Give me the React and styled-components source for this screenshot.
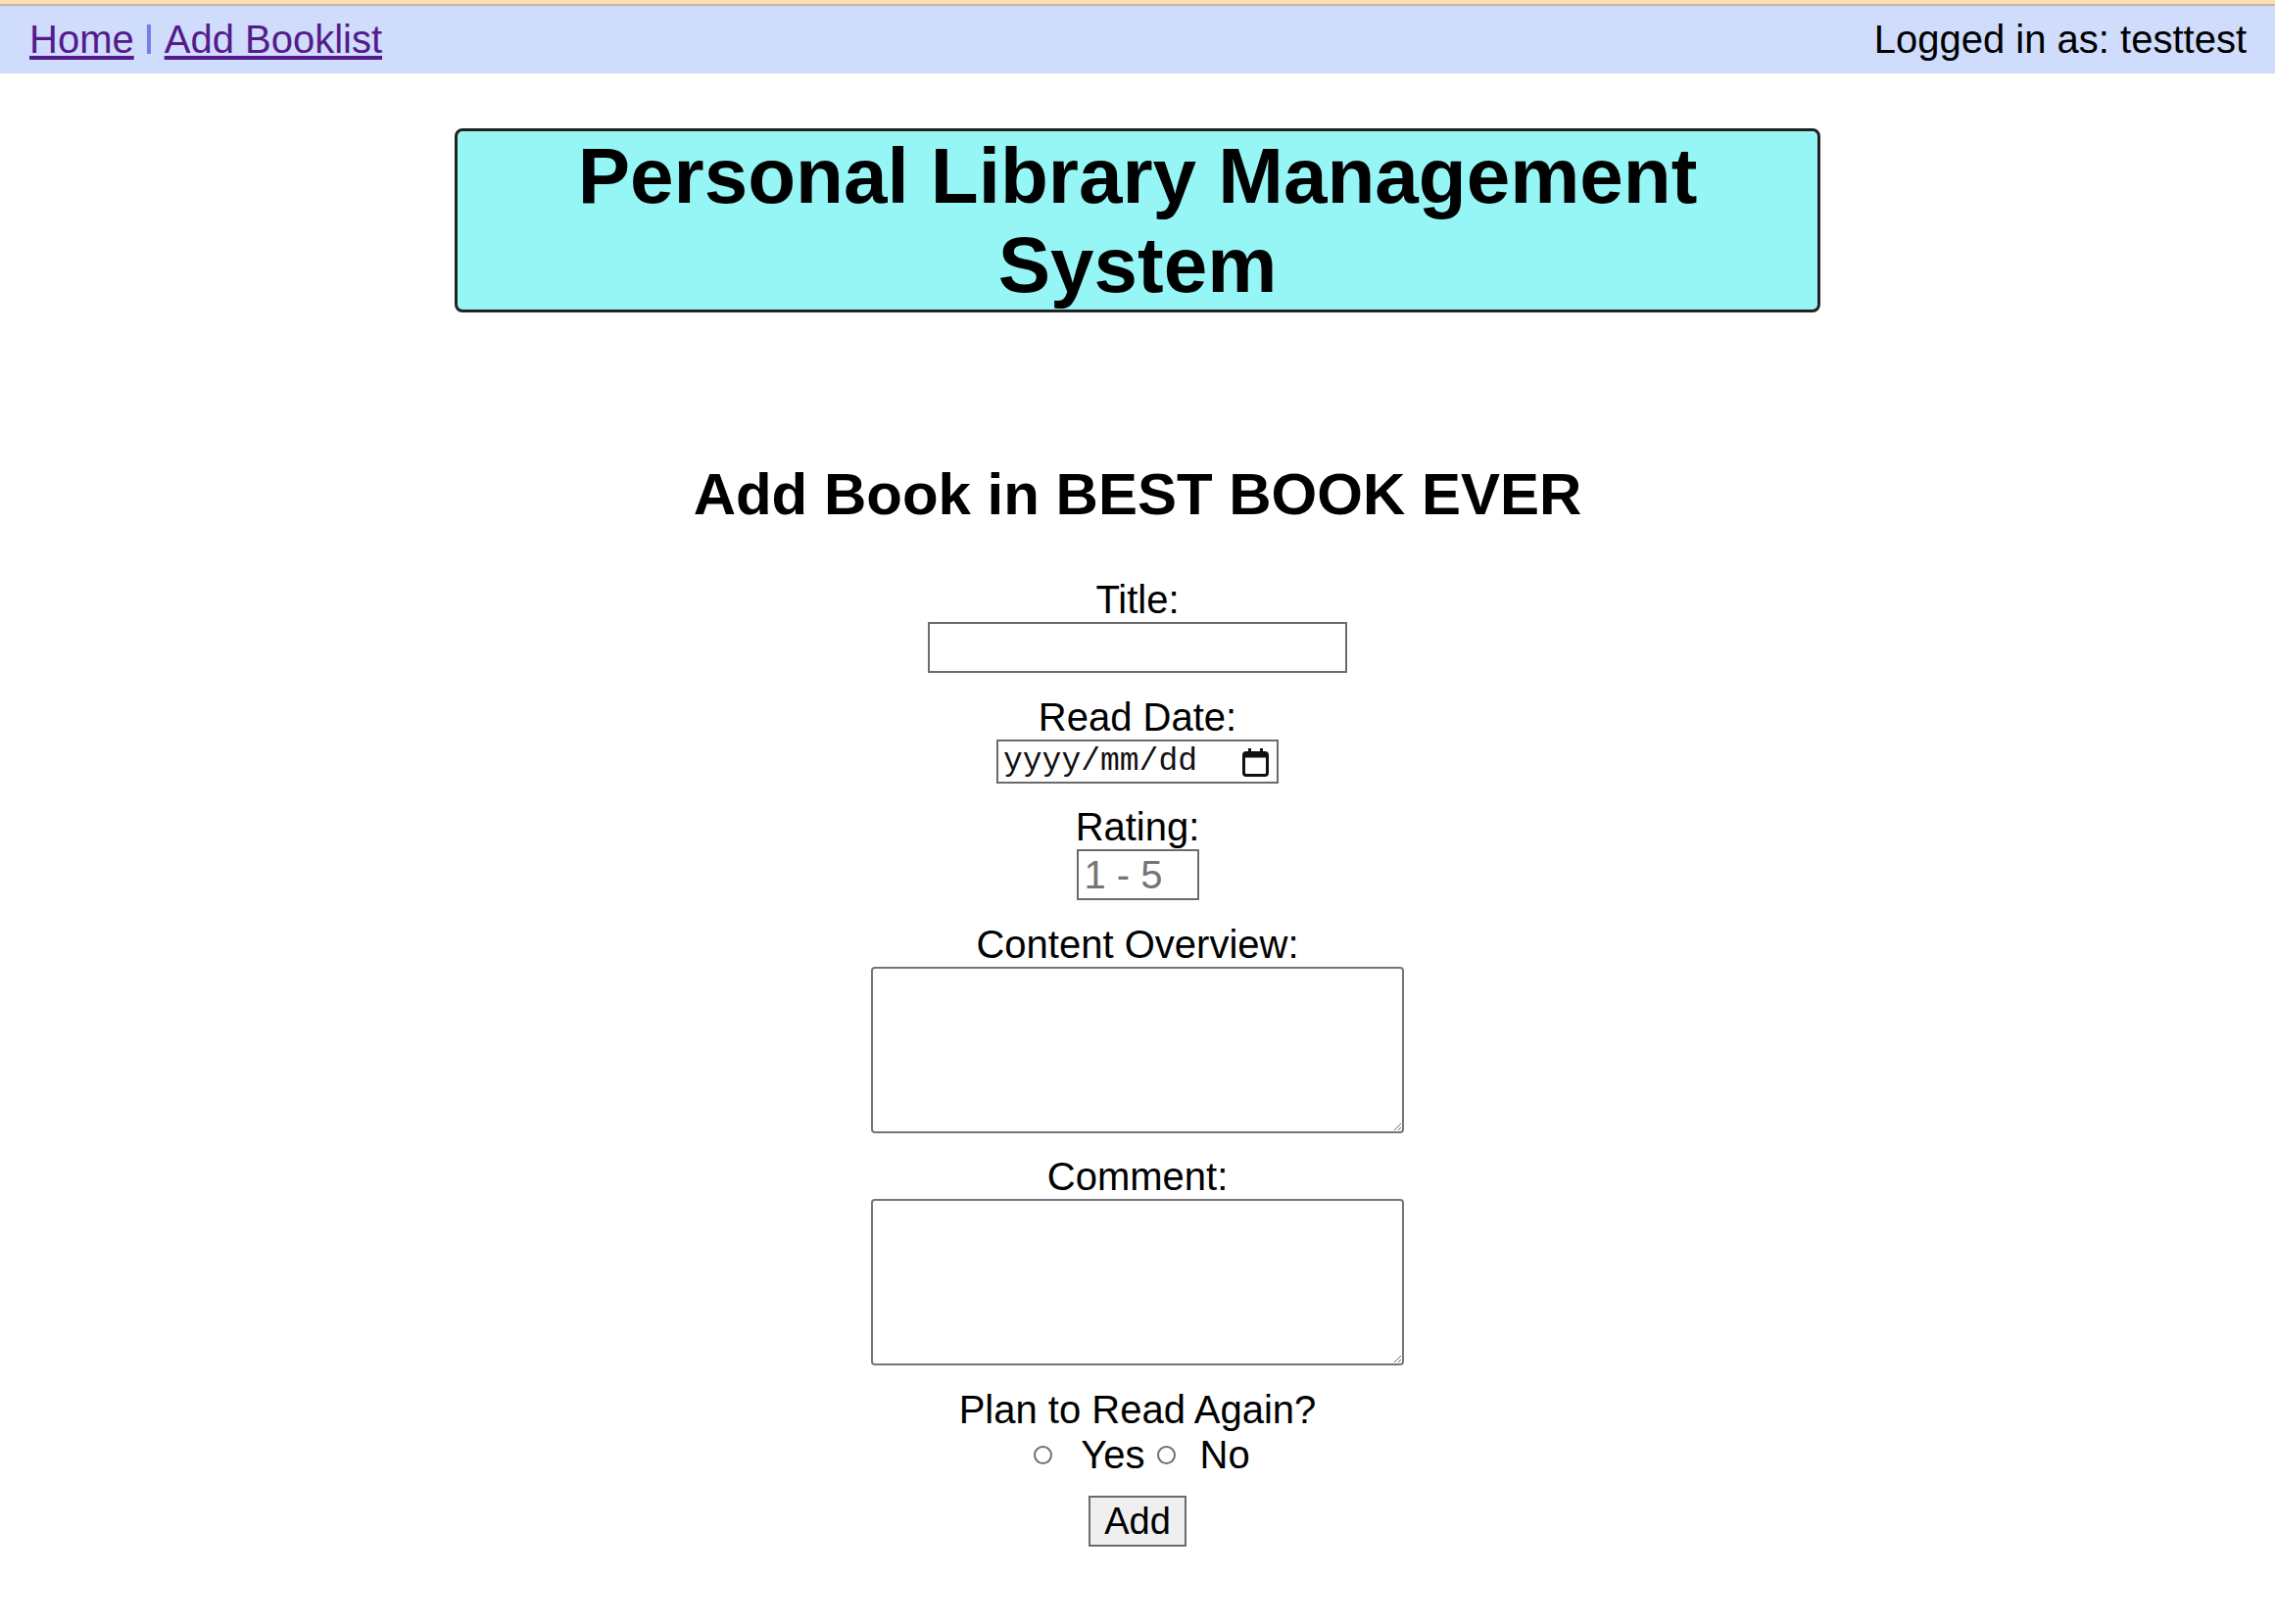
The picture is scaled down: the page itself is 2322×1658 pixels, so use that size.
import React from 'react';
import styled, { createGlobalStyle } from 'styled-components';

const GlobalStyle = createGlobalStyle`
    body {
        margin: 0;
        background: #ffffff;
        font-family: 'Liberation Sans', Arial, Helvetica, sans-serif;
        color: #000000;
    }
`;

const CalendarIcon = () => (
    <svg width='27' height='29' viewBox='0 0 27 29' fill='none'>
        <rect x='6' y='0' width='3' height='5' fill='#111' />
        <rect x='18' y='0' width='3' height='5' fill='#111' />
        <rect x='1.5' y='4.5' width='24' height='23' rx='2.5' stroke='#111' strokeWidth='3' />
        <rect x='1.5' y='4.5' width='24' height='5' fill='#111' />
    </svg>
);

const App = () => {
    return (
        <>
            <GlobalStyle />
            <TopStrip />
            <NavBar>
                <NavLinks>
                    <NavLink href='#'>Home</NavLink>
                    <Divider />
                    <NavLink href='#'>Add Booklist</NavLink>
                </NavLinks>
                <UserInfo>Logged in as: testtest</UserInfo>
            </NavBar>

            <Main>
                <HeaderBox>
                    <SiteTitle>Personal Library Management System</SiteTitle>
                </HeaderBox>

                <SectionTitle>Add Book in BEST BOOK EVER</SectionTitle>

                <Form onSubmit={e => e.preventDefault()}>
                    <Field>
                        <Label htmlFor='title'>Title:</Label>
                        <TextInput id='title' type='text' />
                    </Field>

                    <Field>
                        <Label htmlFor='readDate'>Read Date:</Label>
                        <DateBox id='readDate'>
                            <DateText>yyyy/mm/dd</DateText>
                            <CalendarIcon />
                        </DateBox>
                    </Field>

                    <Field>
                        <Label htmlFor='rating'>Rating:</Label>
                        <RatingInput id='rating' type='text' placeholder='1 - 5' />
                    </Field>

                    <Field>
                        <Label htmlFor='overview'>Content Overview:</Label>
                        <TextArea id='overview' />
                    </Field>

                    <Field>
                        <Label htmlFor='comment'>Comment:</Label>
                        <TextArea id='comment' />
                    </Field>

                    <Field>
                        <Label>Plan to Read Again?</Label>
                        <RadioRow>
                            <Radio type='radio' name='again' id='yes' gap='29px' />
                            <RadioLabel htmlFor='yes'>Yes</RadioLabel>
                            <Radio type='radio' name='again' id='no' gap='25px' />
                            <RadioLabel htmlFor='no'>No</RadioLabel>
                        </RadioRow>
                    </Field>

                    <SubmitButton type='submit'>Add</SubmitButton>
                </Form>
            </Main>
        </>
    );
};

export default App;

const TopStrip = styled.div`
    height: 4px;
    background: #fbdfb9;
    border-bottom: 2px solid #c6b49c;
`;

const NavBar = styled.nav`
    display: flex;
    align-items: center;
    justify-content: space-between;

    height: 69px;
    padding: 0 29px 2px 30px;
    box-sizing: border-box;

    background: #cfdcfb;
    font-size: 40px;
    line-height: 46px;
`;

const NavLinks = styled.div`
    display: flex;
    align-items: center;
`;

const NavLink = styled.a`
    color: #551a8b;
    text-decoration: underline;
    text-decoration-thickness: 4px;
    text-underline-offset: 3px;
`;

const Divider = styled.span`
    display: inline-block;
    width: 4px;
    height: 30px;
    margin: 0 14px 0 13px;
    background: #7b7be8;
`;

const UserInfo = styled.span`
    color: #000000;
`;

const Main = styled.main`
    display: flex;
    flex-direction: column;
    align-items: center;

    padding: 56px 0 60px;
`;

const HeaderBox = styled.header`
    width: 60%;
    box-sizing: border-box;

    background: #96f6f6;
    border: 3px solid #222222;
    border-radius: 8px;
    text-align: center;
`;

const SiteTitle = styled.h1`
    margin: 0;
    font-size: 80px;
    line-height: 91px;
    font-weight: 700;
`;

const SectionTitle = styled.h2`
    margin: 151px 0 50px;
    font-size: 60px;
    line-height: 69px;
    font-weight: 700;
`;

const Form = styled.form`
    display: flex;
    flex-direction: column;
    align-items: center;
`;

const Field = styled.div`
    display: flex;
    flex-direction: column;
    align-items: center;

    margin-bottom: 21.5px;
`;

const Label = styled.label`
    font-size: 40px;
    line-height: 46px;
`;

const TextInput = styled.input`
    width: 428px;
    height: 52px;
    box-sizing: border-box;
    margin: 0;
    padding: 0 6px;

    border: 2px solid #6b6b6b;
    border-radius: 0;
    background: #ffffff;
    font-family: 'Liberation Sans', Arial, sans-serif;
    font-size: 33px;
    outline: none;
`;

const RatingInput = styled(TextInput)`
    width: 125px;
    font-size: 40px;

    &::placeholder {
        color: #757575;
    }
`;

const DateBox = styled.div`
    display: flex;
    align-items: center;
    justify-content: space-between;

    width: 288px;
    height: 45px;
    box-sizing: border-box;
    padding: 2px 8px 0 5px;

    border: 2px solid #6b6b6b;
    background: #ffffff;
`;

const DateText = styled.span`
    font-family: 'Liberation Mono', 'Courier New', monospace;
    font-size: 33px;
    line-height: 40px;
    color: #111111;
`;

const TextArea = styled.textarea`
    width: 544px;
    height: 170px;
    box-sizing: border-box;
    margin: 0;

    border: 2px solid #767676;
    border-radius: 4px;
    background: #ffffff;
    font-family: 'Liberation Sans', Arial, sans-serif;
    font-size: 33px;
    resize: both;
    outline: none;
`;

const RadioRow = styled.div`
    display: flex;
    align-items: center;

    margin-left: 9px;
    font-size: 40px;
    line-height: 46px;
`;

const Radio = styled.input`
    appearance: none;
    flex: none;
    width: 19px;
    height: 19px;
    margin: 1px ${props => props.gap || '27px'} 0 0;
    box-sizing: border-box;

    border: 2px solid #707070;
    border-radius: 50%;
    background: #ffffff;
`;

const RadioLabel = styled.label`
    margin-right: 12px;

    &:last-child {
        margin-right: 0;
    }
`;

const SubmitButton = styled.button`
    width: 100px;
    height: 52px;
    margin-top: -2px;
    padding: 0;

    border: 2px solid #6b6b6b;
    border-radius: 0;
    background: #efefef;
    color: #000000;
    font-family: 'Liberation Sans', Arial, sans-serif;
    font-size: 38px;
`;
